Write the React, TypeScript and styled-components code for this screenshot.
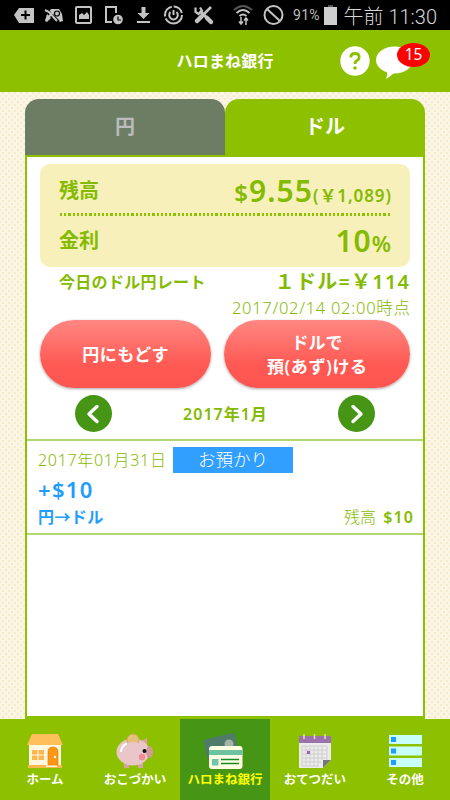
import React from "react";
import styled, { createGlobalStyle, css } from "styled-components";

const GREEN = "#8dc100";
const INK = "#84bb00";

const GlobalStyle = createGlobalStyle`
  * { box-sizing: border-box; }
  body {
    margin: 0;
    font-family: "Noto Sans", "Noto Sans CJK JP", sans-serif;
    color: ${INK};
  }
`;

const Screen = styled.div`
  width: 450px;
  height: 800px;
  overflow: hidden;
  display: flex;
  flex-direction: column;
  background-color: #faf7e6;
  background-image: radial-gradient(circle, #f7e9cc 1px, transparent 1.7px),
    radial-gradient(circle, #f7e9cc 1px, transparent 1.7px);
  background-size: 6px 6px;
  background-position: 0 0, 3px 3px;
`;

/* Single-line text; the trailing letter space is cancelled so edges stay aligned */
const Text = styled.span<{ $s: number; $w?: number; $c?: string; $ls?: number }>`
  display: inline-block;
  white-space: nowrap;
  font-size: ${(p) => p.$s}px;
  font-weight: ${(p) => p.$w ?? 600};
  line-height: 1;
  letter-spacing: ${(p) => p.$ls ?? 0}px;
  margin-right: ${(p) => -(p.$ls ?? 0)}px;
  ${(p) => p.$c && css`color: ${p.$c};`}
`;

const StatusBar = styled.div`
  height: 30px;
  flex: none;
  background: #000;
  display: flex;
  align-items: center;
  justify-content: space-between;
  padding: 0 13px 0 0;
  font-family: Roboto, "Noto Sans CJK JP", sans-serif;
`;
const StatusClock = styled.div`
  display: flex;
  align-items: center;
  gap: 4px;
`;
const Clock = styled.div`
  padding-top: 3px;
  line-height: 1;
  display: flex;
`;

const Header = styled.header`
  height: 62px;
  flex: none;
  background: ${GREEN};
  display: grid;
  grid-template-columns: 1fr auto 1fr;
  align-items: center;
`;
const HeaderActions = styled.div`
  display: flex;
  justify-content: flex-end;
  padding-right: 20px;
`;
const Messages = styled.div`
  position: relative;
  width: 56px;
  height: 38px;
`;
const Count = styled.div`
  position: absolute;
  right: 0;
  top: 1px;
  width: 33px;
  height: 24px;
  border-radius: 50%;
  background: #fe0000;
  display: flex;
  align-items: center;
  justify-content: center;
`;

const Main = styled.main`
  flex: 1;
  min-height: 0;
  padding: 7px 25px 0;
  display: flex;
  flex-direction: column;
`;
const Tabs = styled.div`
  display: flex;
  height: 56px;
  flex: none;
`;
const Tab = styled.div<{ $active?: boolean }>`
  flex: 1;
  border-radius: 14px 14px 0 0;
  background: ${(p) => (p.$active ? GREEN : "#6d7d64")};
  color: ${(p) => (p.$active ? "#fff" : "#bcbcbc")};
  display: flex;
  align-items: center;
  justify-content: center;
`;
const Panel = styled.section`
  flex: 1;
  min-height: 0;
  border: 2px solid ${GREEN};
  border-bottom-width: 3px;
  background: #fff;
`;
const Summary = styled.div`
  margin: 7px 13px 0;
  height: 103px;
  padding: 0 19px;
  border-radius: 10px;
  background: #f7f0bb;
`;
const SummaryRow = styled.div<{ $h: number; $top?: number }>`
  height: ${(p) => p.$h}px;
  padding-top: ${(p) => p.$top ?? 0}px;
  display: flex;
  align-items: center;
  justify-content: space-between;
`;
const Amount = styled.div`
  display: flex;
  align-items: baseline;
  gap: 1px;
`;
const Dots = styled.div`
  height: 3px;
  margin: 0 0 0 1px;
  background: repeating-linear-gradient(90deg, ${GREEN} 0 2.3px, transparent 2.3px 4.2px);
`;
const Rate = styled.div`
  padding: 0 14px 0 32px;
  height: 30px;
  display: flex;
  align-items: center;
  justify-content: space-between;
`;
const AsOf = styled.div`
  height: 23px;
  padding: 0 13px;
  display: flex;
  align-items: center;
  justify-content: flex-end;
`;
const Buttons = styled.div`
  height: 68px;
  padding: 0 13px;
  display: grid;
  grid-template-columns: 171px 186px;
  justify-content: space-between;
`;
const Pill = styled.button`
  border: 0;
  padding: 0;
  font-family: inherit;
  color: #fff;
  border-radius: 34px;
  background: linear-gradient(#ff8782, #ff5953 66%, #ff5550);
  box-shadow: 0 1px 3px rgba(0, 0, 0, 0.35);
  display: flex;
  flex-direction: column;
  align-items: center;
  justify-content: center;
  gap: 7px;
`;
const MonthNav = styled.div`
  height: 51px;
  padding: 0 48px;
  display: flex;
  align-items: center;
  justify-content: space-between;
`;
const Round = styled.div`
  width: 37px;
  height: 37px;
  border-radius: 50%;
  background: #469515;
  display: flex;
  align-items: center;
  justify-content: center;
`;
const Entry = styled.article`
  height: 96px;
  padding: 6px 10px 0 11px;
  border-top: 2px solid #b3d873;
  border-bottom: 2px solid #b3d873;
`;
const EntryRow = styled.div<{ $h: number; $gap?: number; $spread?: boolean }>`
  height: ${(p) => p.$h}px;
  display: flex;
  align-items: center;
  gap: ${(p) => p.$gap ?? 0}px;
  justify-content: ${(p) => (p.$spread ? "space-between" : "flex-start")};
`;
const Kind = styled.div`
  width: 120px;
  height: 26px;
  background: #319fff;
  display: flex;
  align-items: center;
  justify-content: center;
`;

const Nav = styled.nav`
  height: 81px;
  flex: none;
  background: ${GREEN};
  display: grid;
  grid-template-columns: repeat(5, 1fr);
`;
const NavItem = styled.div<{ $active?: boolean }>`
  display: flex;
  flex-direction: column;
  align-items: center;
  padding-top: 12px;
  gap: 5px;
  color: ${(p) => (p.$active ? "#ffff00" : "#fff")};
  background: ${(p) => (p.$active ? "#469515" : "transparent")};
`;

const StatusIcons = () => (
  <svg width="286" height="30" fill="none" stroke="#c4c4c4" strokeWidth="2">
    <path d="M14 15l5-7h15v15H19z" fill="#c4c4c4" stroke="none" />
    <path d="M21 15h9M25.500 10.500v9" stroke="#000" />
    <path d="M51 9h8l3 5 1 7-3 1-4-4h-5l-4 4-2-1 2-7z" fill="#c4c4c4" stroke="none" />
    <path d="M45 9l13 13" stroke="#000" strokeWidth="4" />
    <path d="M45 10l4 2 8 9M46 20l7-8" strokeWidth="2" />
    <circle cx="57" cy="13.500" r="2.500" fill="#c4c4c4" stroke="#000" strokeWidth="1.200" />
    <rect x="76" y="7" width="15" height="16" rx="1" />
    <path d="M79 19v-4l3-2 2 2 3-3 2 3v4z" fill="#c4c4c4" stroke="none" />
    <path d="M112 22h-6V7h10v6" />
    <circle cx="118" cy="19.500" r="4.800" fill="#c4c4c4" stroke="none" />
    <path d="M118 16.500v3.500h3" stroke="#000" strokeWidth="1.200" />
    <path d="M141.500 7h4v6h4l-6 6-6-6h4z" fill="#c4c4c4" stroke="none" />
    <path d="M137 22h13" />
    <circle cx="173.500" cy="15" r="8.500" strokeDasharray="23 2 13 2 11 2" />
    <path d="M170.500 12a4.300 4.300 0 1 0 6 0M173.500 10v5" />
    <path d="M200 11l10 10" strokeWidth="3" />
    <path d="M195.500 7.500v4.500l3 2 3.500-3.500-2-3" strokeWidth="2.200" />
    <path d="M211 7l-8 8" strokeWidth="2.500" />
    <path d="M202 16l-5 5" strokeWidth="4.500" strokeLinecap="round" />
    <path d="M207 18l4 4" strokeWidth="4.500" strokeLinecap="round" />
    <path d="M234 10q9-8 18 0" stroke="#555" />
    <path d="M236.500 13q6.500-6 13 0M239.500 16q3.500-3 7 0" />
    <path d="M241 17v7m-2-2.500l2 2.500 2-2.500M246 25v-7m-2 2.500l2-2.500 2 2.500" strokeWidth="1.500" />
    <circle cx="273.500" cy="15" r="9" />
    <path d="M267 9l13 12" />
  </svg>
);

const BatteryIcon = () => (
  <svg width="13" height="20">
    <path d="M4 0h5v3H4z" fill="#555" />
    <path d="M0 2h13v18H0z" fill="#cfcfcf" />
  </svg>
);

const HelpIcon = () => (
  <svg width="36" height="38">
    <circle cx="17" cy="19" r="14.700" fill="#fff" />
    <path d="M12.800 15.500q0-4 4.200-4t4.200 3.800q0 2-2.200 3.200-2 1-2 3.500" fill="none" stroke={GREEN} strokeWidth="2.800" />
    <circle cx="17" cy="26" r="1.800" fill={GREEN} />
  </svg>
);

const BubbleIcon = () => (
  <svg width="56" height="38">
    <ellipse cx="20.500" cy="18" rx="18.500" ry="13.500" fill="#fff" />
    <path d="M13 29q1 4-1 8 5-3 9-7z" fill="#fff" />
  </svg>
);

const Chevron = ({ right }: { right?: boolean }) => (
  <svg width="20" height="20" fill="none" stroke="#fff" strokeWidth="3.400" strokeLinecap="round" strokeLinejoin="round">
    <path d={right ? "M7 2.500l8 7.500-8 7.500" : "M13 2.500l-8 7.500 8 7.500"} />
  </svg>
);

const HomeIcon = () => (
  <svg width="38" height="38">
    <path d="M3 13h32v21H3z" fill="#fff7df" />
    <path d="M6 3h26l5 11H1z" fill="#ffc05c" />
    <path d="M2 34h34v3H2z" fill="#ffb84c" />
    <path d="M20 34h11v2H20z" fill="#fff3d0" />
    <path d="M6 19h12v10H6z" fill="#ffb74d" />
    <path d="M12 19v10M6 24h12" stroke="#fff7df" strokeWidth="1.200" />
    <path d="M22 34V21q0-5 5-5t5 5v13z" fill="#ff9714" stroke="#d97c00" strokeWidth=".6" />
    <circle cx="29" cy="26" r="1.200" fill="#fff" />
  </svg>
);

const PigIcon = () => (
  <svg width="38" height="38">
    <path d="M8 30h5v7H8zM22 30h5v7h-5z" fill="#d9a5a8" />
    <path d="M25 10l6-3v8z" fill="#dfa0a4" />
    <ellipse cx="17" cy="21" rx="16.500" ry="13.500" fill="#eac6c9" />
    <ellipse cx="33.500" cy="21" rx="3.500" ry="6" fill="#cf9a97" />
    <circle cx="17" cy="9" r="6" fill="#e5c078" stroke="#d0a960" />
    <path d="M10 13q7-4 14 0v3H10z" fill="#eac6c9" />
    <path d="M5 20q1-5 5-7" fill="none" stroke="#fff" strokeWidth="2.200" strokeLinecap="round" />
    <circle cx="28.500" cy="20" r="2" fill="#111" />
    <circle cx="26" cy="26" r="3.200" fill="#f08c98" />
  </svg>
);

const CardsIcon = () => (
  <svg width="42" height="38">
    <rect x="1" y="5" width="32" height="21" rx="3" fill="#4f7b6b" transform="rotate(-13 17 15)" />
    <circle cx="25" cy="13" r="4.500" fill="#a5b3a8" />
    <rect x="5" y="15" width="33.500" height="23" rx="3" fill="#fffde2" />
    <path d="M5 19h33.500v5H5z" fill="#6cc2a1" />
    <path d="M8 28h6.500v6.500H8z" fill="#6fc5ad" />
    <path d="M17 28.500h18M17 32.500h18" stroke="#178b28" strokeWidth="1.500" />
  </svg>
);

const CalendarIcon = () => (
  <svg width="38" height="38">
    <path d="M3 9h32v20l-8 8H3z" fill="#ececec" />
    <path d="M3 5h32v7H3z" fill="#9b72ab" />
    <path d="M27 29h8l-8 8z" fill="#777" />
    <path d="M6 15h25M6 19h25M6 23h25M6 27h25M6 31h19M6 35h17M6 15v20M10 15v20M14 15v20M18 15v20M22 15v20M26 15v14M31 15v14" stroke="#c9c9c9" fill="none" strokeWidth=".8" />
    <path d="M11 20h3v3h-3z" fill="#9867ae" />
    <path d="M8 3v5M18.500 3v5M29 3v5" stroke="#e2d6b0" strokeWidth="1.600" />
  </svg>
);

const ListIcon = () => (
  <svg width="38" height="38">
    {[4, 15.500, 27].map((y) => (
      <g key={y}>
        <rect x="3" y={y} width="33" height="9" fill="#c8fff9" />
        <rect x="5" y={y + 2} width="5" height="5" fill="#219cff" />
      </g>
    ))}
  </svg>
);

const navItems = [
  { label: "ホーム", icon: <HomeIcon /> },
  { label: "おこづかい", icon: <PigIcon /> },
  { label: "ハロまね銀行", icon: <CardsIcon />, active: true },
  { label: "おてつだい", icon: <CalendarIcon /> },
  { label: "その他", icon: <ListIcon /> },
];

export default function App() {
  return (
    <>
      <GlobalStyle />
      <Screen>
        <StatusBar>
          <StatusIcons />
          <StatusClock>
            <Text $s={14} $w={400} $c="#bdbdbd" $ls={0.3}>91%</Text>
            <BatteryIcon />
          </StatusClock>
          <Clock><Text $s={20} $w={300} $c="#d6d6d6">午前 11:30</Text></Clock>
        </StatusBar>
        <Header>
          <span />
          <Text $s={16} $c="#fff" $ls={0.2}>ハロまね銀行</Text>
          <HeaderActions>
            <HelpIcon />
            <Messages>
              <BubbleIcon />
              <Count><Text $s={15.5} $w={400} $c="#fff">15</Text></Count>
            </Messages>
          </HeaderActions>
        </Header>
        <Main>
          <Tabs>
            <Tab><Text $s={20}>円</Text></Tab>
            <Tab $active><Text $s={20}>ドル</Text></Tab>
          </Tabs>
          <Panel>
            <Summary>
              <SummaryRow $h={49} $top={5}>
                <Text $s={20}>残高</Text>
                <Amount>
                  <Text $s={24}>$</Text>
                  <Text $s={30} $ls={1.1}>9.55</Text>
                  <Text $s={17} $ls={0.9}>(￥1,089)</Text>
                </Amount>
              </SummaryRow>
              <Dots />
              <SummaryRow $h={49}>
                <Text $s={20}>金利</Text>
                <Amount>
                  <Text $s={30} $ls={0.8}>10</Text>
                  <Text $s={22}>%</Text>
                </Amount>
              </SummaryRow>
            </Summary>
            <Rate>
              <Text $s={16} $ls={0.3}>今日のドル円レート</Text>
              <Text $s={20} $ls={1.2}>１ドル=￥114</Text>
            </Rate>
            <AsOf><Text $s={16.5} $w={300} $ls={0.72}>2017/02/14 02:00時点</Text></AsOf>
            <Buttons>
              <Pill><Text $s={17} $ls={0.4}>円にもどす</Text></Pill>
              <Pill>
                <Text $s={17}>ドルで</Text>
                <Text $s={17} $ls={0.7}>預(あず)ける</Text>
              </Pill>
            </Buttons>
            <MonthNav>
              <Round><Chevron /></Round>
              <Text $s={16} $ls={1}>2017年1月</Text>
              <Round><Chevron right /></Round>
            </MonthNav>
            <Entry>
              <EntryRow $h={26} $gap={7}>
                <Text $s={16} $w={300} $ls={0.68}>2017年01月31日</Text>
                <Kind><Text $s={17.5} $w={300} $c="#fff">お預かり</Text></Kind>
              </EntryRow>
              <EntryRow $h={31}>
                <Text $s={22} $c="#219cff" $ls={1.3}>+$10</Text>
              </EntryRow>
              <EntryRow $h={25} $spread>
                <Text $s={16} $c="#219cff" $ls={0.4}>円→ドル</Text>
                <EntryRow $h={24} $gap={7}>
                  <Text $s={16} $w={300}>残高</Text>
                  <Text $s={16} $ls={1.2}>$10</Text>
                </EntryRow>
              </EntryRow>
            </Entry>
          </Panel>
        </Main>
        <Nav>
          {navItems.map((n) => (
            <NavItem key={n.label} $active={n.active}>
              {n.icon}
              <Text $s={12.5}>{n.label}</Text>
            </NavItem>
          ))}
        </Nav>
      </Screen>
    </>
  );
}
